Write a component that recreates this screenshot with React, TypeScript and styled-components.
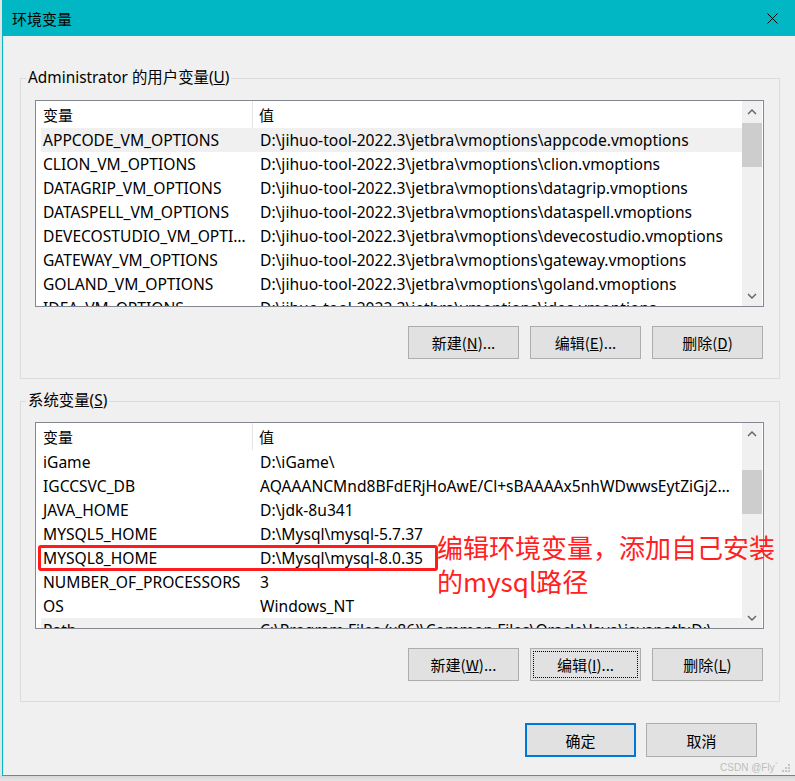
import styled, { createGlobalStyle } from "styled-components";

const teal = "#00b7c3";
const font = `"Noto Sans", "Noto Sans CJK SC", sans-serif`;
const cjk = `"Noto Sans CJK SC", "Noto Sans", sans-serif`;

type EnvVar = { name: string; value: string };

const jet = "D:\\jihuo-tool-2022.3\\jetbra\\vmoptions\\";

const userVars: EnvVar[] = [
  { name: "APPCODE_VM_OPTIONS", value: jet + "appcode.vmoptions" },
  { name: "CLION_VM_OPTIONS", value: jet + "clion.vmoptions" },
  { name: "DATAGRIP_VM_OPTIONS", value: jet + "datagrip.vmoptions" },
  { name: "DATASPELL_VM_OPTIONS", value: jet + "dataspell.vmoptions" },
  { name: "DEVECOSTUDIO_VM_OPTIONS", value: jet + "devecostudio.vmoptions" },
  { name: "GATEWAY_VM_OPTIONS", value: jet + "gateway.vmoptions" },
  { name: "GOLAND_VM_OPTIONS", value: jet + "goland.vmoptions" },
  { name: "IDEA_VM_OPTIONS", value: jet + "idea.vmoptions" },
];

const systemVars: EnvVar[] = [
  { name: "iGame", value: "D:\\iGame\\" },
  {
    name: "IGCCSVC_DB",
    value: "AQAAANCMnd8BFdERjHoAwE/Cl+sBAAAAx5nhWDwwsEytZiGj2XqPwQAAAACAAAAAAAQZgAA",
  },
  { name: "JAVA_HOME", value: "D:\\jdk-8u341" },
  { name: "MYSQL5_HOME", value: "D:\\Mysql\\mysql-5.7.37" },
  { name: "MYSQL8_HOME", value: "D:\\Mysql\\mysql-8.0.35" },
  { name: "NUMBER_OF_PROCESSORS", value: "3" },
  { name: "OS", value: "Windows_NT" },
  {
    name: "Path",
    value: "C:\\Program Files (x86)\\Common Files\\Oracle\\Java\\javapath;D:\\Program Files",
  },
];

const GlobalStyle = createGlobalStyle`
  html, body {
    margin: 0;
    padding: 0;
  }
  body {
    background: #e4e4e4;
    font-family: ${font};
  }
`;

const App = () => {
  return (
    <Page>
      <GlobalStyle />
      <Window>
        <TitleBar>
          <Title>环境变量</Title>
          <CloseIcon width="11" height="11" viewBox="0 0 11 11">
            <path d="M0.5 0.5 L10.5 10.5 M10.5 0.5 L0.5 10.5" stroke="#000" strokeWidth="1" />
          </CloseIcon>
        </TitleBar>

        <Body>
          <Group>
            <Legend>
              Administrator 的用户变量(<u>U</u>)
            </Legend>
            <VarList vars={userVars} selected={0} thumbTop={22} />
            <ButtonRow>
              <Button>
                新建(<u>N</u>)...
              </Button>
              <Button>
                编辑(<u>E</u>)...
              </Button>
              <Button>
                删除(<u>D</u>)
              </Button>
            </ButtonRow>
          </Group>

          <Group $second>
            <Legend>
              系统变量(<u>S</u>)
            </Legend>
            <ListWrap>
              <VarList vars={systemVars} selected={7} thumbTop={47} marked={4} />
              <Note>
                编辑环境变量，添加自己安装
                <br />
                的mysql路径
              </Note>
            </ListWrap>
            <ButtonRow>
              <Button>
                新建(<u>W</u>)...
              </Button>
              <Button $focus>
                编辑(<u>I</u>)...
              </Button>
              <Button>
                删除(<u>L</u>)
              </Button>
            </ButtonRow>
          </Group>

          <Footer>
            <FooterButton $primary>确定</FooterButton>
            <FooterButton>取消</FooterButton>
          </Footer>
        </Body>

        <Watermark>
          CSDN @Fly`
          <svg width="10" height="10" viewBox="0 0 10 10">
            <rect x="7" y="1" width="2" height="2" fill="#c4c4c4" />
            <rect x="4" y="4" width="2" height="2" fill="#c4c4c4" />
            <rect x="7" y="4" width="2" height="2" fill="#c4c4c4" />
            <rect x="1" y="7" width="2" height="2" fill="#c4c4c4" />
            <rect x="4" y="7" width="2" height="2" fill="#c4c4c4" />
            <rect x="7" y="7" width="2" height="2" fill="#c4c4c4" />
          </svg>
        </Watermark>
      </Window>
    </Page>
  );
};

const HEADER_H = 27;
const ROW_H = 24;

const VarList = ({
  vars,
  selected,
  thumbTop,
  marked,
}: {
  vars: EnvVar[];
  selected: number;
  thumbTop: number;
  marked?: number;
}) => {
  return (
    <List>
      <Table>
        <HeaderRow>
          <HeaderName>变量</HeaderName>
          <HeaderValue>值</HeaderValue>
        </HeaderRow>
        {vars.map((v, i) => (
          <Row key={v.name} $selected={i === selected}>
            <NameCell>{v.name}</NameCell>
            <ValueCell>{v.value}</ValueCell>
          </Row>
        ))}
        {marked !== undefined && <Mark style={{ top: HEADER_H + marked * ROW_H - 1 }} />}
      </Table>
      <ScrollBar>
        <Arrow viewBox="0 0 10 6">
          <path d="M1 5 L5 1 L9 5" stroke="#606060" strokeWidth="1.4" fill="none" />
        </Arrow>
        <Track>
          <Thumb style={{ top: thumbTop - 21 }} />
        </Track>
        <Arrow viewBox="0 0 10 6">
          <path d="M1 1 L5 5 L9 1" stroke="#606060" strokeWidth="1.4" fill="none" />
        </Arrow>
      </ScrollBar>
    </List>
  );
};

export default App;

const Page = styled.div`
  width: 795px;
  height: 781px;
  overflow: hidden;
  padding-left: 2px;
  box-sizing: border-box;
  background: linear-gradient(to bottom, #e4e4e4 0, #e4e4e4 775px, #d6d6d6 776px, #e6e6e6 781px);
`;

const Window = styled.div`
  position: relative;
  width: 793px;
  height: 776px;
  box-sizing: border-box;
  background: #f0f0f0;
  border-left: 1px solid ${teal};
  border-bottom: 1px solid ${teal};
  display: flex;
  flex-direction: column;
`;

const TitleBar = styled.div`
  height: 36px;
  flex: none;
  margin-left: -1px;
  background: ${teal};
  display: flex;
  align-items: center;
  justify-content: space-between;
  padding: 0 17px 0 10px;
`;

const Title = styled.div`
  font-family: ${cjk};
  font-size: 15px;
  color: #000;
`;

const CloseIcon = styled.svg`
  display: block;
`;

const Body = styled.div`
  padding: 32px 15px 0 17px;
  display: flex;
  flex-direction: column;
`;

const Group = styled.fieldset<{ $second?: boolean }>`
  margin: ${(p) => (p.$second ? "12px 0 0" : "0")};
  padding: ${(p) => (p.$second ? "11px" : "12px")} 15px ${(p) => (p.$second ? "20px" : "19px")} 14px;
  border: 1px solid #dcdcdc;
  min-width: 0;
`;

const Legend = styled.legend`
  margin-left: -9px;
  padding: 0 2px;
  font-family: ${font};
  font-size: 15.4px;
  line-height: 20px;
  color: #000;
`;

const ListWrap = styled.div`
  position: relative;
`;

const List = styled.div`
  height: 207px;
  box-sizing: border-box;
  border: 1px solid #828790;
  background: #fff;
  display: flex;
`;

const Table = styled.div`
  position: relative;
  flex: 1;
  min-width: 0;
  overflow: hidden;
`;

const HeaderRow = styled.div`
  height: ${HEADER_H}px;
  display: flex;
  align-items: center;
  font-family: ${cjk};
  font-size: 15px;
`;

const HeaderName = styled.div`
  width: 217px;
  height: 100%;
  box-sizing: border-box;
  padding-left: 7px;
  display: flex;
  align-items: center;
  border-right: 1px solid #e5e5e5;
`;

const HeaderValue = styled.div`
  padding-left: 6px;
`;

const Row = styled.div<{ $selected?: boolean }>`
  height: ${ROW_H}px;
  margin-left: 5px;
  display: flex;
  align-items: center;
  background: ${(p) => (p.$selected ? "#f0f0f0" : "transparent")};
  font-size: 15.6px;
  color: #000;
  white-space: nowrap;
`;

const NameCell = styled.div`
  width: 212px;
  flex: none;
  box-sizing: border-box;
  padding: 0 3px 0 2px;
  overflow: hidden;
  text-overflow: ellipsis;
`;

const ValueCell = styled.div`
  flex: 1;
  min-width: 0;
  padding: 0 10px 0 7px;
  overflow: hidden;
  text-overflow: ellipsis;
`;

const Mark = styled.div`
  position: absolute;
  left: 2px;
  width: 400px;
  height: 26px;
  box-sizing: border-box;
  border: 3px solid #ff1c1c;
  border-radius: 3px;
`;

const Note = styled.div`
  position: absolute;
  left: 402px;
  top: 108px;
  font-family: ${cjk};
  font-size: 26px;
  line-height: 34px;
  color: #ff2121;
  white-space: nowrap;
`;

const ScrollBar = styled.div`
  width: 20px;
  flex: none;
  margin-right: 1px;
  background: #f0f0f0;
  display: flex;
  flex-direction: column;
  align-items: center;
`;

const Arrow = styled.svg`
  width: 10px;
  height: 6px;
  margin: 8px 0 7px;
  flex: none;
`;

const Track = styled.div`
  position: relative;
  flex: 1;
  width: 100%;
`;

const Thumb = styled.div`
  position: absolute;
  left: 0;
  right: 0;
  height: 44px;
  background: #cdcdcd;
`;

const ButtonRow = styled.div`
  margin-top: 19px;
  padding-right: 1px;
  display: flex;
  justify-content: flex-end;
  gap: 11px;
`;

const Button = styled.button<{ $focus?: boolean }>`
  position: relative;
  width: 111px;
  height: 33px;
  box-sizing: border-box;
  border: 1px solid #adadad;
  background: #e1e1e1;
  font-family: ${cjk};
  font-size: 15px;
  color: #000;
  padding: 0;
  outline: ${(p) => (p.$focus ? "1px dotted #000" : "none")};
  outline-offset: -4px;
`;

const Footer = styled.div`
  margin-top: 21px;
  padding-right: 23px;
  display: flex;
  justify-content: flex-end;
  gap: 10px;
`;

const FooterButton = styled.button<{ $primary?: boolean }>`
  width: 111px;
  height: 34px;
  box-sizing: border-box;
  border: ${(p) => (p.$primary ? "2px solid #0078d7" : "1px solid #adadad")};
  background: #e1e1e1;
  font-family: ${cjk};
  font-size: 15px;
  color: #000;
  padding: 0;
`;

const Watermark = styled.div`
  position: absolute;
  right: 4px;
  bottom: 2px;
  display: flex;
  align-items: center;
  gap: 3px;
  font-family: "Liberation Sans", sans-serif;
  font-size: 10px;
  color: #bdbdbd;
`;
